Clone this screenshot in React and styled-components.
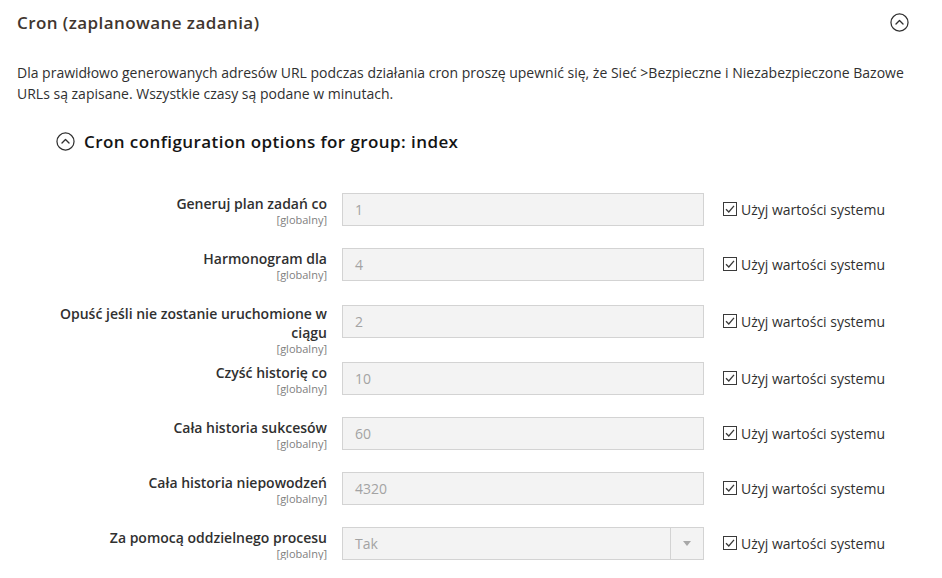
import React from "react";
import styled, { createGlobalStyle } from "styled-components";

const Global = createGlobalStyle`
  html, body { margin: 0; padding: 0; background: #fff; }
  body { font-family: "Open Sans", "Noto Sans", sans-serif; color: #303030; }
  * { box-sizing: border-box; }
`;

const Page = styled.div`
  width: 942px;
  padding: 0 33px 0 17px;
`;

const Header = styled.div`
  height: 44px;
  display: flex;
  align-items: center;
  justify-content: space-between;
`;

const Title = styled.h2`
  margin: 0;
  font-size: 17px;
  line-height: 1;
  font-weight: 600;
  letter-spacing: 0.025em;
  color: #41362f;
`;

const Description = styled.p`
  margin: 17.5px 0 0;
  max-width: 888px;
  font-size: 14px;
  line-height: 21px;
  color: #303030;
`;

const SubHeader = styled.div`
  margin: 26px 0 0;
  padding-left: 39px;
  height: 24px;
  display: flex;
  align-items: center;
  gap: 9px;
`;

const SubTitle = styled.h3`
  margin: 0;
  font-size: 17px;
  line-height: 24px;
  font-weight: 600;
  letter-spacing: 0.025em;
  color: #141414;
`;

const Rows = styled.div`
  margin-top: 39px;
  margin-left: 30px;
  display: flex;
  flex-direction: column;
  gap: 22px;
`;

const Row = styled.div`
  display: grid;
  grid-template-columns: 280px 362px auto;
  column-gap: 15px;
  align-items: start;
`;

const Label = styled.div`
  padding-top: 1px;
  text-align: right;
  font-size: 14px;
  line-height: 19px;
  font-weight: 600;
  color: #303030;
`;

const Scope = styled.div`
  font-size: 11px;
  line-height: 13px;
  font-weight: 400;
  color: #808080;
  margin-bottom: -15px;
`;

const Control = styled.div`
  align-self: center;
  height: 33px;
  border: 1px solid #d3d3d3;
  background: #f3f3f3;
  display: flex;
  align-items: center;
  font-size: 14px;
  color: #a3a3a3;
`;

const Value = styled.span`
  flex: 1;
  padding-left: 12px;
`;

const SelectArrow = styled.span`
  width: 33px;
  height: 100%;
  border-left: 1px solid #d3d3d3;
  display: flex;
  align-items: center;
  justify-content: center;
  &::after {
    content: "";
    border-left: 4px solid transparent;
    border-right: 4px solid transparent;
    border-top: 5px solid #a8a8a8;
  }
`;

const Inherit = styled.label`
  align-self: center;
  margin-left: 4px;
  display: flex;
  align-items: center;
  gap: 4px;
  font-size: 14px;
  line-height: 19px;
  color: #303030;
`;

const CircleIcon = ({ size = 19 }) => (
  <svg width={size} height={size} viewBox="0 0 20 20" fill="none">
    <circle cx="10" cy="10" r="9" stroke="#303030" strokeWidth="1.3" />
    <path d="M6.3 11.6 L10 7.9 L13.7 11.6" stroke="#303030" strokeWidth="1.4" strokeLinecap="round" strokeLinejoin="round" />
  </svg>
);

const CheckIcon = () => (
  <svg width="14" height="14" viewBox="0 0 14 14" fill="none">
    <rect x="0.5" y="0.5" width="13" height="13" stroke="#3a3a3a" strokeWidth="1" fill="#fff" />
    <path d="M3 7.2 L5.8 10 L11 3.8" stroke="#3a3a3a" strokeWidth="1.3" fill="none" />
  </svg>
);

const fields = [
  { label: "Generuj plan zadań co", value: "1" },
  { label: "Harmonogram dla", value: "4" },
  { label: "Opuść jeśli nie zostanie uruchomione w ciągu", value: "2" },
  { label: "Czyść historię co", value: "10" },
  { label: "Cała historia sukcesów", value: "60" },
  { label: "Cała historia niepowodzeń", value: "4320" },
  { label: "Za pomocą oddzielnego procesu", value: "Tak", select: true },
];

export default function App() {
  return (
    <Page>
      <Global />
      <Header>
        <Title>Cron (zaplanowane zadania)</Title>
        <CircleIcon />
      </Header>
      <Description>
        Dla prawidłowo generowanych adresów URL podczas działania cron proszę upewnić się, że Sieć &gt;Bezpieczne i
        Niezabezpieczone Bazowe URLs są zapisane. Wszystkie czasy są podane w minutach.
      </Description>
      <SubHeader>
        <CircleIcon />
        <SubTitle>Cron configuration options for group: index</SubTitle>
      </SubHeader>
      <Rows>
        {fields.map((f) => (
          <Row key={f.label}>
            <Label>
              {f.label}
              <Scope>[globalny]</Scope>
            </Label>
            <Control>
              <Value>{f.value}</Value>
              {f.select && <SelectArrow />}
            </Control>
            <Inherit>
              <CheckIcon />
              Użyj wartości systemu
            </Inherit>
          </Row>
        ))}
      </Rows>
    </Page>
  );
}
